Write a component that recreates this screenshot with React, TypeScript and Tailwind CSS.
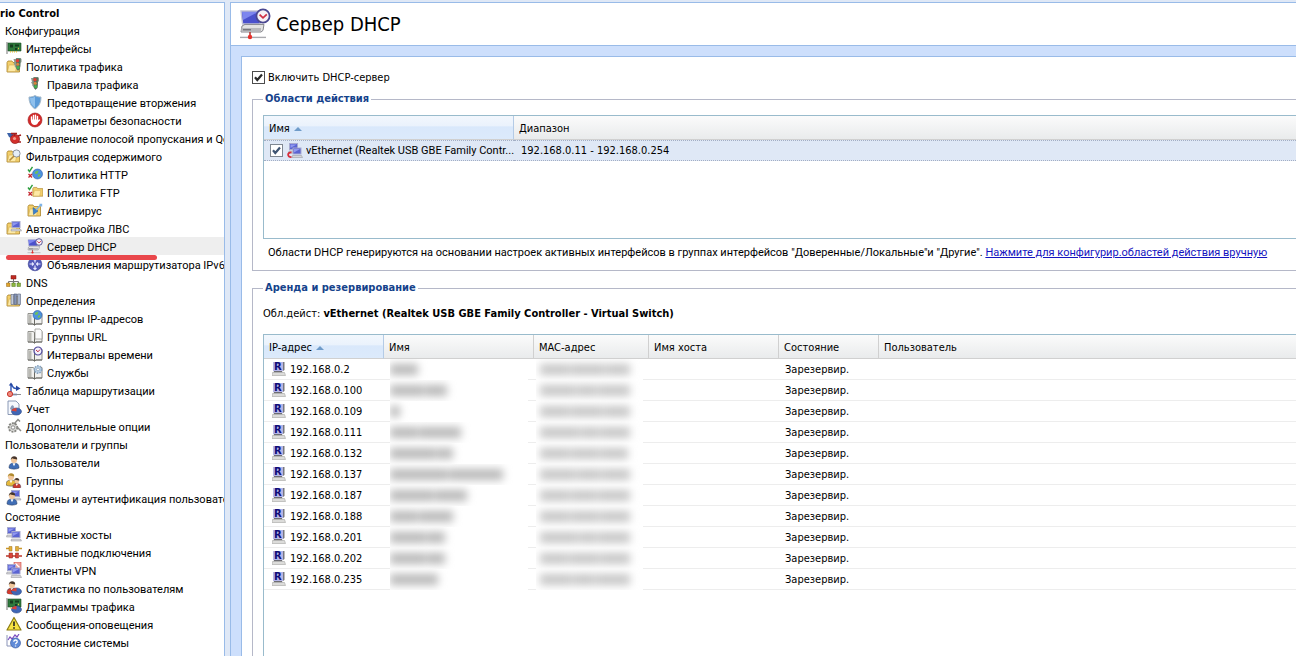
import type { ReactNode } from "react";
import clsx from "clsx";

/* ---------- icon parts, all on a 16x16 grid ---------- */

const Folder = () => (
  <>
    <path d="M1 4.500 2 3h4l1 1.500h6.500v9.500H1z" fill="#f3cf6b" stroke="#a8832c" strokeWidth=".8" />
    <path d="M1.500 13.600 3 7h8l-1.500 6.600z" fill="#fdeaa6" stroke="#c9a34a" strokeWidth=".5" />
  </>
);

const Screen = ({ x = 0, y = 0 }: { x?: number; y?: number }) => (
  <g transform={`translate(${x} ${y})`}>
    <rect x=".5" y=".5" width="8" height="6" fill="#5a63d2" stroke="#a7aad0" />
    <path d="M1.500 1.500h6L1.500 5z" fill="#8f97f0" />
    <path d="M0 8h9l1 2H-.5z" fill="#d6d6da" stroke="#8e8e96" strokeWidth=".5" />
  </g>
);

const Clock = ({ x, y }: { x: number; y: number }) => (
  <g transform={`translate(${x} ${y})`}>
    <circle r="4" fill="#f4f2fb" stroke="#514b9c" strokeWidth="1.200" />
    <path d="M-2-1 0 .8 2-1.500" fill="none" stroke="#c22f45" strokeWidth="1" />
  </g>
);

const Book = () => (
  <>
    <path d="M1 3.500h5l1.500 1 1.500-1h6V14H9l-1.500 1L6 14H1z" fill="#f1f1ef" stroke="#85857f" strokeWidth=".9" />
    <path d="M2 4.500h2.500V13H2z" fill="#b9b9b3" />
    <path d="M7.500 4.500V15M1 14h5l1.500 1L9 14h6" fill="none" stroke="#6a6a64" strokeWidth="1" />
  </>
);

const Person = ({ x = 0, y = 0, body = "#3f6db5", hair = "#46352b" }) => (
  <g transform={`translate(${x} ${y})`}>
    <path d="M1 13c0-4 2-5 5-5s5 1 5 5c-2 1.500-8 1.500-10 0z" fill={body} stroke="#2c3c5c" strokeWidth=".5" />
    <path d="m4.500 8.300 1.500 3 1.500-3z" fill="#fff" />
    <circle cx="6" cy="5" r="3" fill="#f2c79b" />
    <path d="M2.800 5C2.300 0 9.700 0 9.200 4.500 7.500 4 6 4 4 3.300z" fill={hair} />
  </g>
);

const Globe = ({ x, y, r = 4 }: { x: number; y: number; r?: number }) => (
  <g transform={`translate(${x} ${y})`}>
    <circle r={r} fill="#4d92e0" stroke="#2b5ca8" strokeWidth=".6" />
    <path d="M-3-1c1-2 3-2.500 4-2L0-.5l-1.500.5zM0 1l2.500-1 .5 1.500L1 3.300z" fill="#6fbf5a" />
  </g>
);

const TickCross = () => (
  <>
    <path d="m1 3.500 1.500 2L5.500.8" fill="none" stroke="#2f9e3f" strokeWidth="1.400" />
    <path d="m1.500 8 3.500 3.500M5 8l-3.500 3.500" stroke="#c4262e" strokeWidth="1.300" />
  </>
);

const Lights = ({ x = 0, y = 0 }: { x?: number; y?: number }) => (
  <g transform={`translate(${x} ${y})`}>
    <path d="M0 1h2l1-1h4l1 1v3l-1 1v3l-1 3-1.500 2L3 11 1 8h.5L0 5h1z" fill="#8b9a8e" />
    <path d="M2.500.5h4.500L6.500 11l-2 1.500L3 11z" fill="#52715a" />
    <circle cx="4" cy="2.800" r="1.700" fill="#e23b34" />
    <circle cx="4.200" cy="6.200" r="1.500" fill="#d8853a" />
    <circle cx="4.600" cy="9.500" r="1.500" fill="#43b34c" />
  </g>
);

const Pie = () => (
  <>
    <ellipse cx="10.500" cy="11.500" rx="5" ry="3.600" fill="#3f66b5" stroke="#27407a" strokeWidth=".5" />
    <path d="M10.500 11.500 5.600 10.800C6 9 8 8 10.500 8z" fill="#d94338" />
  </>
);

const Card = () => (
  <>
    <path d="M1 2v12" stroke="#8b8b8b" strokeWidth="1.200" />
    <path d="M2 3h13v8H2z" fill="#2e7a3c" stroke="#1c4f27" strokeWidth=".6" />
    <path d="M4 4.500h3v3H4zM9 4.500h4v2H9zM9 8h2v2H9z" fill="#173d20" />
    <path d="M4 11.800h7M12 8.500h2" stroke="#e2c24b" strokeWidth="1.500" strokeDasharray="1 1" />
  </>
);

const icons: Record<string, ReactNode> = {
  card: <Card />,
  policy: <><Folder /><Lights x={7.500} y={0} /></>,
  lights: <Lights x={4} y={1} />,
  shield: (
    <>
      <path d="M8 1.500c2 1.300 4 1.500 6 1.500 0 5-1.500 9-6 12C3.500 12 2 8 2 3c2 0 4-.2 6-1.500z" fill="#5b9bd8" stroke="#a9bccb" />
      <path d="M8 2.500v11.300C4.500 11.500 3.200 8 3 4c2 0 3.500-.5 5-1.500z" fill="#8fc0ec" />
    </>
  ),
  hand: (
    <>
      <circle cx="8" cy="8" r="7" fill="#d42a2a" stroke="#9d1a1a" strokeWidth=".6" />
      <path d="M4.500 8.500V5M6.500 8V3.500M8.500 8V3.300M10.500 8.500V4.500M10.500 10l2-2" stroke="#fff" strokeWidth="1.400" strokeLinecap="round" />
      <path d="M4 7.500h7.200v2.500c-.5 2-1.500 3-3.500 3-2.200 0-3.300-1.500-3.700-3z" fill="#fff" />
    </>
  ),
  valve: (
    <>
      <path d="M1 3 6 3l2 2-3 3-2-1z" fill="#3b62a8" />
      <circle cx="9" cy="9" r="4.600" fill="#d22f2b" stroke="#8a1615" strokeWidth=".6" />
      <path d="M5 3.500h6M8.500 3v3M12 6l3-1M12 12l3 0" stroke="#a31e1e" strokeWidth="1.600" />
      <circle cx="8.500" cy="8.500" r="1.600" fill="#f39a8c" />
    </>
  ),
  filter: (
    <>
      <Folder />
      <circle cx="10.500" cy="5.500" r="3.600" fill="#e5eef8" stroke="#8c93a0" />
      <path d="m8 8-4.500 4.500" stroke="#b58a3a" strokeWidth="1.600" />
    </>
  ),
  http: <><Globe x={10.500} y={8} r={5} /><TickCross /></>,
  ftp: <><g transform="translate(5 1) scale(.8)"><Folder /></g><TickCross /></>,
  virus: (
    <>
      <Folder />
      <path d="M6 5.500 11 9l-4.500 3.500z" fill="#3a82d0" stroke="#215698" strokeWidth=".5" />
      <path d="m9 8 5-5.500M12.500 2.500h2v2" fill="none" stroke="#7fb4e8" strokeWidth="1.400" />
    </>
  ),
  lan: <><Folder /><Screen x={5.500} y={1} /></>,
  dhcp: (
    <>
      <path d="M1 1.500h10l-.5 6.500H1.800z" fill="#4a50cc" stroke="#c3c4d8" strokeWidth=".7" />
      <path d="M1.500 2h8L2 6z" fill="#7d85ee" />
      <path d="M1.500 9 3 8.200h9.500L12 11.200l-1 .8H1z" fill="#e3e3e3" stroke="#86868c" strokeWidth=".5" />
      <path d="M1.200 10h9.800v1.800H1.100z" fill="#b9b9bc" />
      <path d="M2 10.900h4" stroke="#5d5d62" strokeWidth=".5" />
      <path d="M5.500 12v2.500" stroke="#b43c38" strokeWidth=".8" />
      <path d="M.5 14.700h13" stroke="#a9a9ae" strokeWidth=".7" />
      <circle cx="5.500" cy="14.500" r="1.100" fill="#e8302a" />
      <circle cx="12" cy="4" r="3.300" fill="#f6f1f6" stroke="#4a4790" strokeWidth=".9" />
      <path d="m10.300 3.300 1.700 1.600 1.900-1.700" fill="none" stroke="#cf2f45" strokeWidth=".9" />
    </>
  ),
  ipv6: (
    <>
      <circle cx="8" cy="8" r="6.800" fill="#5258b8" stroke="#343a8e" strokeWidth=".6" />
      <path d="M8 2.500v4M8 9.500v4M2.500 8h4M9.500 8h4M6.500 4 8 2.500 9.500 4M6.500 12 8 13.500 9.500 12M5 6.500 6.500 8 5 9.500M11 6.500 9.500 8l1.500 1.500" fill="none" stroke="#e6e8ff" strokeWidth="1.200" />
    </>
  ),
  dns: (
    <>
      <path d="M7.500 5v5M2.500 10V7.500h10V10" fill="none" stroke="#777" />
      <path d="M5 1.500h5v3.500H5z" fill="#c02a22" stroke="#7d1612" strokeWidth=".5" />
      <path d="M.5 9h3.500v3.500H.5z" fill="#e0a52e" stroke="#93671a" strokeWidth=".5" />
      <path d="M5.800 9h3.500v3.500H5.800zM11 9h3.500v3.500H11z" fill="#8fb83f" stroke="#4f7423" strokeWidth=".5" />
    </>
  ),
  books: (
    <>
      <Folder />
      <path d="M5 2.500h2.800v10H5z" fill="#c3cad8" stroke="#5c6780" strokeWidth=".6" />
      <path d="M8 2h2.800v10.500H8z" fill="#8493b4" stroke="#4b5876" strokeWidth=".6" />
      <path d="M11.500 2h3v10.500h-3z" fill="#a9b5cc" stroke="#5c6780" strokeWidth=".6" />
    </>
  ),
  ipGroup: <><Book /><Globe x={10.500} y={5} r={4.500} /></>,
  urlGroup: <><Book /><path d="M8 1h5l2 2v8H8z" fill="#fbfbfb" stroke="#9a9a94" strokeWidth=".8" /></>,
  time: <><Book /><Clock x={11} y={5} /></>,
  services: (
    <>
      <Book />
      <circle cx="11" cy="5.500" r="3.600" fill="#bcd3e8" stroke="#8aa5c0" strokeWidth="1.600" strokeDasharray="1.600 1" />
      <circle cx="11" cy="5.500" r="1.400" fill="#fff" stroke="#6e8ba8" strokeWidth=".6" />
    </>
  ),
  routes: (
    <>
      <path d="M5 12V2.500M4 12.500h7M5 3c2 0 1 3.500 5 3.500" fill="none" stroke="#2f56b5" strokeWidth="1.400" />
      <path d="m2.800 3.500 2.200-3 2.200 3zM10 3.500 14.500 6.500 10 9z" fill="#2447a3" />
      <path d="M5 12.500h10" stroke="#8d8d93" />
      <circle cx="4" cy="12" r="2.600" fill="#ef8a7d" stroke="#c8372e" />
    </>
  ),
  report: (
    <>
      <path d="M2 1h8l3 3v10.500H2z" fill="#f5f8fd" stroke="#7f8fae" strokeWidth=".9" />
      <path d="M4 9c1-4 3-5 4-2l-1 4z" fill="#8899b8" />
      <Pie />
    </>
  ),
  tools: (
    <>
      <circle cx="7" cy="9.500" r="4.300" fill="#d5d5d2" stroke="#858580" strokeWidth="1.800" strokeDasharray="2 1.100" />
      <circle cx="7" cy="9.500" r="1.700" fill="#fff" stroke="#777" strokeWidth=".8" />
      <path d="m8 6 4-4.500 2 2M11 9l4 4" fill="none" stroke="#8b8b88" strokeWidth="1.500" />
    </>
  ),
  user: <Person x={2} y={1} />,
  users: <><Person x={-1} y={0} body="#e6b93c" hair="#b08a2c" /><g transform="translate(6 5) scale(.8)"><Person body="#c93930" /></g></>,
  domains: <><Screen x={5} y={0} /><Person x={0} y={1} /></>,
  hosts: <><Screen x={1} y={1} /><Screen x={5.500} y={5} /></>,
  links: (
    <>
      <path d="M0 4.500h3M13 4.500h3" stroke="#c9972a" strokeWidth="1.600" />
      <path d="M3 2.500h3v4.500H3zM9.500 2.500h3v4.500h-3z" fill="#e3ae38" stroke="#9c721b" strokeWidth=".5" />
      <path d="M0 12h3M13 12h3M6 12h4" stroke="#c0392b" strokeWidth="1.600" />
      <path d="M3 9h3.500v5H3zM9.500 9h3v5h-3z" fill="#d8463a" stroke="#8f2018" strokeWidth=".5" />
    </>
  ),
  vpn: (
    <>
      <path d="M8 0h7v8H8z" fill="#f0a09a" stroke="#cf4a42" strokeWidth=".6" />
      <path d="m9.500 1.500 4 4" stroke="#fff" strokeWidth="1.200" />
      <Screen x={1} y={2} />
      <Screen x={5.500} y={5.500} />
    </>
  ),
  userStats: <><Person x={0} y={0} body="#b8402f" /><path d="M1 11.500c2-2.500 5-2 7 0l-1 2.500H2z" fill="#d23b2f" /><Pie /></>,
  charts: <><g transform="translate(0 -2)"><Card /></g><Pie /></>,
  alert: (
    <>
      <path d="M8 1.500 15 14H1z" fill="#f7e243" stroke="#8b7b12" strokeWidth="1.200" strokeLinejoin="round" />
      <path d="M8 5.500v4.500M8 11.200v1.600" stroke="#222" strokeWidth="1.600" />
    </>
  ),
  health: (
    <>
      <path d="M1 1v11h5" fill="none" stroke="#8a94b8" />
      <path d="m2 6 2-3 2 2 3-4 2 2 2-3" fill="none" stroke="#7a4fc0" strokeWidth="1.200" />
      <circle cx="9.500" cy="9" r="5" fill="#5f8bd8" stroke="#2b4f9c" strokeWidth=".6" />
      <path d="M7.800 7.800c0-2.500 3.600-2.300 3.400 0-.2 1.200-1.700 1.200-1.700 2.500M9.500 11.400v1.200" fill="none" stroke="#fff" strokeWidth="1.300" />
    </>
  ),
  ethernet: (
    <>
      <Screen x={2} y={0} />
      <Screen x={5.500} y={4.500} />
      <path d="M4.500 9.500c-4.500-.5-4.500 5 0 4.500" fill="none" stroke="#d82d3a" strokeWidth="1.800" />
    </>
  ),
};

function Icon({ name, size = "size-4" }: { name: string; size?: string }) {
  return (
    <svg viewBox="0 0 16 16" aria-hidden="true" className={clsx("shrink-0", size)}>
      {icons[name]}
    </svg>
  );
}

// Computer with an "R" on the screen: a reserved lease
function ReservedIcon() {
  return (
    <svg viewBox="0 0 14 14" aria-hidden="true" className="size-[14px] shrink-0">
      <path d="M11 0h1.500v8L11 9z" fill="#77777d" />
      <path d="M1 0h10v9H1z" fill="#b4b5ea" />
      <path d="M2 9h8l.5 1.500h-9z" fill="#6d6d73" />
      <path d="M.5 10.500h12l1 3H0z" fill="#dcdcda" stroke="#a5a5a2" strokeWidth=".6" />
      <text x="2" y="8" fontSize="10" fontWeight="bold" fill="#0f0c78" className="font-['DejaVu_Sans']">R</text>
    </svg>
  );
}

/* ---------- navigation ---------- */

const tree = [
  { level: 0, label: "Конфигурация" },
  { level: 1, label: "Интерфейсы", icon: "card" },
  { level: 1, label: "Политика трафика", icon: "policy" },
  { level: 2, label: "Правила трафика", icon: "lights" },
  { level: 2, label: "Предотвращение вторжения", icon: "shield" },
  { level: 2, label: "Параметры безопасности", icon: "hand" },
  { level: 1, label: "Управление полосой пропускания и QoS", icon: "valve" },
  { level: 1, label: "Фильтрация содержимого", icon: "filter" },
  { level: 2, label: "Политика HTTP", icon: "http" },
  { level: 2, label: "Политика FTP", icon: "ftp" },
  { level: 2, label: "Антивирус", icon: "virus" },
  { level: 1, label: "Автонастройка ЛВС", icon: "lan" },
  { level: 2, label: "Сервер DHCP", icon: "dhcp", active: true },
  { level: 2, label: "Объявления маршрутизатора IPv6", icon: "ipv6" },
  { level: 1, label: "DNS", icon: "dns" },
  { level: 1, label: "Определения", icon: "books" },
  { level: 2, label: "Группы IP-адресов", icon: "ipGroup" },
  { level: 2, label: "Группы URL", icon: "urlGroup" },
  { level: 2, label: "Интервалы времени", icon: "time" },
  { level: 2, label: "Службы", icon: "services" },
  { level: 1, label: "Таблица маршрутизации", icon: "routes" },
  { level: 1, label: "Учет", icon: "report" },
  { level: 1, label: "Дополнительные опции", icon: "tools" },
  { level: 0, label: "Пользователи и группы" },
  { level: 1, label: "Пользователи", icon: "user" },
  { level: 1, label: "Группы", icon: "users" },
  { level: 1, label: "Домены и аутентификация пользователей", icon: "domains" },
  { level: 0, label: "Состояние" },
  { level: 1, label: "Активные хосты", icon: "hosts" },
  { level: 1, label: "Активные подключения", icon: "links" },
  { level: 1, label: "Клиенты VPN", icon: "vpn" },
  { level: 1, label: "Статистика по пользователям", icon: "userStats" },
  { level: 1, label: "Диаграммы трафика", icon: "charts" },
  { level: 1, label: "Сообщения-оповещения", icon: "alert" },
  { level: 1, label: "Состояние системы", icon: "health" },
];

const indent = ["pl-[5px]", "pl-[6px]", "pl-[27px]"];

function Sidebar() {
  return (
    <nav className="w-[225px] shrink-0 overflow-hidden border-t border-r border-[#99bbe8] bg-white font-[Roboto,'Noto_Sans',sans-serif]">
      <div className="h-[18px] pt-[2px] font-['DejaVu_Sans_Condensed','Noto_Sans',sans-serif] leading-[18px] font-bold">rio Control</div>
      <ul>
        {tree.map((item) => (
          <li key={item.label} className={clsx("relative", item.active && "bg-[#eeeeee]")}>
            <a href="#" className={clsx("flex h-[18px] items-center gap-1 whitespace-nowrap", indent[item.level])}>
              {item.icon && <Icon name={item.icon} />}
              <span className="pt-[3px] leading-4">{item.label}</span>
            </a>
            {/* marker stroke under the current page */}
            {item.active && <span className="absolute top-[18px] left-[6px] z-10 h-[5px] w-[151px] rounded-full bg-[#e9474b]" />}
          </li>
        ))}
      </ul>
    </nav>
  );
}

/* ---------- form bits ---------- */

function Checkbox({ id, muted }: { id: string; muted?: boolean }) {
  return (
    <span className="relative inline-flex size-[13px] shrink-0">
      <input
        id={id}
        type="checkbox"
        defaultChecked
        aria-label={muted ? "Включить область" : undefined}
        className={clsx("size-[13px] appearance-none border bg-white", muted ? "border-[#7f8791]" : "border-[#4c4c4c]")}
      />
      <svg viewBox="0 0 13 13" aria-hidden="true" className="pointer-events-none absolute inset-0">
        <path d="M3 6.200 5.300 9 10 3.500" fill="none" stroke={muted ? "#3f5573" : "#2a2a2a"} strokeWidth="2.200" />
      </svg>
    </span>
  );
}

const SortArrow = () => (
  <svg viewBox="0 0 8 4" aria-hidden="true" className="ml-1 inline-block h-1 w-2 align-middle">
    <path d="M4 0 8 4H0z" fill="#6f9bc9" />
  </svg>
);

const th = "h-6 border-b border-[#d0d0d0] p-0 pt-[3px] pl-[5px] text-left font-normal";
const thPlain = "bg-gradient-to-b from-[#fbfbfb] to-[#e9ebec]";
const thSorted = "border-r border-r-[#b4cbe6] bg-linear-[to_bottom,#f2f7fd_0%,#eaf2fc_45%,#d9e8fb_46%,#dceafb_100%]";

/* ---------- scopes ---------- */

function Scopes() {
  return (
    <fieldset className="border-y border-l border-[#b5b8c8] pb-2 pl-[10px]">
      <legend className="px-[2px] leading-[14px] font-bold text-[#15428b]">Области действия</legend>
      <div className="mt-[9px] h-[124px] border-y border-l border-[#99bbcc] bg-white">
        <table className="w-full table-fixed border-separate border-spacing-0">
          <colgroup>
            <col className="w-[250px]" />
            <col />
          </colgroup>
          <thead>
            <tr>
              <th className={clsx(th, thSorted)}>Имя<SortArrow /></th>
              <th className={clsx(th, thPlain)}>Диапазон</th>
            </tr>
          </thead>
          <tbody>
            <tr className="bg-[#dfe8f6]">
              <td className="h-[21px] border-y border-dotted border-[#a3aec4] p-0 pl-[6px]">
                <div className="flex items-center">
                  <Checkbox id="scope-vethernet" muted />
                  <span className="ml-1"><Icon name="ethernet" /></span>
                  <span className="ml-[3px] overflow-hidden font-[Roboto,'Noto_Sans',sans-serif] leading-[18px] whitespace-nowrap">
                    vEthernet (Realtek USB GBE Family Contr...
                  </span>
                </div>
              </td>
              <td className="border-y border-dotted border-[#a3aec4] p-0 pt-px pl-[7px] leading-[18px]">192.168.0.11 - 192.168.0.254</td>
            </tr>
          </tbody>
        </table>
      </div>
      <p className="mt-[5px] pl-[5px] font-[Roboto,'Noto_Sans',sans-serif] leading-[18px] whitespace-nowrap">
        Области DHCP генерируются на основании настроек активных интерфейсов в группах интерфейсов "Доверенные/Локальные"и "Другие".{" "}
        <a href="#" className="text-[#1414c0] underline">Нажмите для конфигурир.областей действия вручную</a>
      </p>
    </fieldset>
  );
}

/* ---------- leases ---------- */

// name / mac hold the word widths of the hidden values
const leases = [
  { ip: "192.168.0.2", name: [28], mac: [30, 34, 24] },
  { ip: "192.168.0.100", name: [34, 22], mac: [36, 20, 32] },
  { ip: "192.168.0.109", name: [10], mac: [30, 32, 26] },
  { ip: "192.168.0.111", name: [28, 42], mac: [40, 18, 30] },
  { ip: "192.168.0.132", name: [46, 16], mac: [30, 28, 28] },
  { ip: "192.168.0.137", name: [58, 54], mac: [36, 24, 28] },
  { ip: "192.168.0.187", name: [44, 32], mac: [30, 26, 32] },
  { ip: "192.168.0.188", name: [28, 34], mac: [30, 28, 30] },
  { ip: "192.168.0.201", name: [36, 18], mac: [38, 18, 32] },
  { ip: "192.168.0.202", name: [36, 18], mac: [28, 30, 30] },
  { ip: "192.168.0.235", name: [48], mac: [32, 22, 34] },
];

function Hidden({ words, faint }: { words: number[]; faint?: boolean }) {
  return (
    <div className={clsx("-mb-px flex h-[21px] items-center overflow-hidden bg-white", faint ? "ml-[2px] w-[107px] pl-1" : "ml-[6px] w-[138px]")}>
      <div className="flex gap-px blur-[4px]">
        {words.map((w, i) => (
          <span key={i} className={clsx("h-[11px]", faint ? "bg-[#c6c6c6]" : "bg-[#b8b8b8]")} style={{ width: w }} />
        ))}
      </div>
    </div>
  );
}

const td = "h-[21px] border-b border-[#ededed] p-0";

function Leases() {
  const columns = ["Имя", "MAC-адрес", "Имя хоста", "Состояние"];

  return (
    <fieldset className="flex min-h-0 flex-1 flex-col border-t border-l border-[#b5b8c8] pl-[10px]">
      <legend className="px-[2px] leading-[14px] font-bold text-[#15428b]">Аренда и резервирование</legend>
      <p className="mt-[10px] leading-[18px]">
        Обл.дейст: <b>vEthernet (Realtek USB GBE Family Controller - Virtual Switch)</b>
      </p>
      <div className="mt-[11px] flex-1 border-t border-l border-[#99bbcc] bg-white">
        <table className="w-full table-fixed border-separate border-spacing-0">
          <colgroup>
            <col className="w-[120px]" />
            <col className="w-[150px]" />
            <col className="w-[115px]" />
            <col className="w-[130px]" />
            <col className="w-[100px]" />
            <col />
          </colgroup>
          <thead>
            <tr>
              <th className={clsx(th, thSorted)}>IP-адрес<SortArrow /></th>
              {columns.map((c) => (
                <th key={c} className={clsx(th, thPlain, "border-r border-r-[#d0d0d0]")}>{c}</th>
              ))}
              <th className={clsx(th, thPlain)}>Пользователь</th>
            </tr>
          </thead>
          <tbody>
            {leases.map((l) => (
              <tr key={l.ip}>
                <td className={clsx(td, "pl-2")}>
                  <div className="flex items-center gap-1">
                    <ReservedIcon />
                    <span className="pt-[2px] leading-[18px]">{l.ip}</span>
                  </div>
                </td>
                <td className={td}><Hidden words={l.name} /></td>
                <td className={td}><Hidden words={l.mac} faint /></td>
                <td className={td} />
                <td className={clsx(td, "pt-[2px] pl-[6px] leading-[18px]")}>Зарезервир.</td>
                <td className={td} />
              </tr>
            ))}
          </tbody>
        </table>
      </div>
    </fieldset>
  );
}

export default function App() {
  return (
    <div className="flex h-screen gap-[5px] overflow-hidden bg-[#dfe8f6] pt-[2px] font-['DejaVu_Sans_Condensed','Noto_Sans',sans-serif] text-[11px] text-black">
      <Sidebar />
      <main className="flex min-w-0 flex-1 flex-col overflow-hidden border-t border-l border-[#99bbe8] bg-[#cddffc]">
        <header className="flex h-[43px] shrink-0 items-center gap-[5px] border-b border-[#99bbe8] bg-white pl-2">
          <Icon name="dhcp" size="size-8" />
          <h1 className="text-[20px] leading-6">Сервер DHCP</h1>
        </header>

        <section className="mt-[10px] ml-[10px] flex min-h-0 flex-1 flex-col border-t border-l border-[#99bbe8] bg-white pt-[11px] pl-[10px]">
          <div className="flex h-[18px] shrink-0 items-center gap-[3px]">
            <Checkbox id="dhcp-enabled" />
            <label htmlFor="dhcp-enabled" className="pt-[2px]">Включить DHCP-сервер</label>
          </div>
          <div className="mt-[6px] flex min-h-0 flex-1 flex-col gap-[10px]">
            <Scopes />
            <Leases />
          </div>
        </section>
      </main>
    </div>
  );
}
